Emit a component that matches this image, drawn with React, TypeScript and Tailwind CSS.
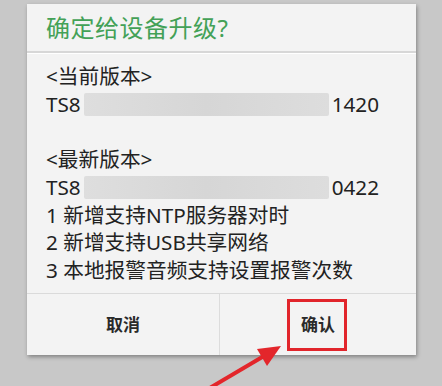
import React from 'react';

const font = { fontFamily: '"Noto Sans", "Noto Sans CJK SC", sans-serif' };

// 打码的版本号区域
const Blur = () => (
  <span className="inline-block h-[23px] w-[245px] align-middle mx-[3px] rounded-[2px] bg-gradient-to-r from-[#dedede] via-[#d6d6d6] to-[#dddddd]" />
);

export default function App() {
  return (
    <div className="relative w-[442px] h-[386px] overflow-hidden bg-[#c8c8c8]" style={font}>
      <div className="ml-[27px] mt-[4px] w-[389px] h-[351px] bg-[#f3f3f3] flex flex-col shadow-[1px_2px_4px_rgba(0,0,0,0.35)]">
        <div className="h-[47px] flex items-center pl-[19px] text-[24px] text-[#43a157] tracking-[0.5px]">
          确定给设备升级?
        </div>
        <div className="h-[2px] bg-[#d7d7d7]" />
        <div className="h-px bg-white" />
        <div className="flex-1 pl-[19px] pt-[9px] text-[20.7px] leading-[27.7px] text-[#222]">
          <div>&lt;当前版本&gt;</div>
          <div className="flex items-center">TS8<Blur />1420</div>
          <div>&nbsp;</div>
          <div>&lt;最新版本&gt;</div>
          <div className="flex items-center">TS8<Blur />0422</div>
          <div>1 新增支持NTP服务器对时</div>
          <div>2 新增支持USB共享网络</div>
          <div>3 本地报警音频支持设置报警次数</div>
        </div>
        <div className="h-[62px] flex border-t border-[#dadada] text-[17px] font-semibold text-[#2a2a2a]">
          <div className="w-[193px] flex items-center justify-center border-r border-[#dcdcdc]">取消</div>
          <div className="flex-1 flex items-center justify-center">确认</div>
        </div>
      </div>
      <div className="absolute left-[287px] top-[299px] w-[60px] h-[52px] border-[3px] border-[#e1252b]" />
      <svg className="absolute left-0 top-0" width="442" height="386" viewBox="0 0 442 386">
        <line x1="203" y1="392" x2="264" y2="356" stroke="#e3262b" strokeWidth="4" />
        <polygon points="281,346 257,349 267,366" fill="#e3262b" />
      </svg>
    </div>
  );
}
